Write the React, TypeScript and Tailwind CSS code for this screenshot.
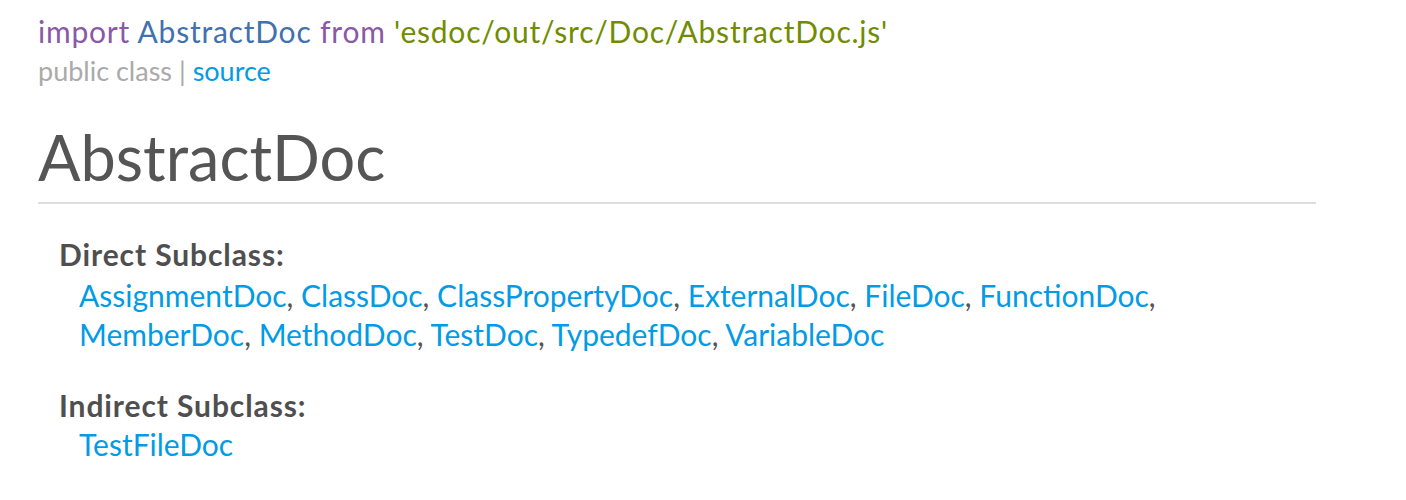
import React from "react";

const direct = [
  "AssignmentDoc",
  "ClassDoc",
  "ClassPropertyDoc",
  "ExternalDoc",
  "FileDoc",
  "FunctionDoc",
  "MemberDoc",
  "MethodDoc",
  "TestDoc",
  "TypedefDoc",
  "VariableDoc",
];

function LinkList({ names }: { names: string[] }) {
  return (
    <div className="pl-[20px] max-w-[1120px]">
      {names.map((n, i) => (
        <span key={n}>
          <a href="#" className="text-[#039be5]">
            {n}
          </a>
          {i < names.length - 1 ? ", " : ""}
        </span>
      ))}
    </div>
  );
}

export default function App() {
  return (
    <div
      className="min-h-[500px] bg-white text-[#555] pl-[38px] pt-[12px]"
      style={{ fontFamily: "Lato, 'Open Sans', sans-serif" }}
    >
      <div className="text-[30px] leading-[39px] tracking-[0.78px]">
        <span className="text-[#8959a8]">import</span>{" "}
        <span className="text-[#4271ae]">AbstractDoc</span>{" "}
        <span className="text-[#8959a8]">from</span>{" "}
        <span className="text-[#718c00]">'esdoc/out/src/Doc/AbstractDoc.js'</span>
      </div>
      <div className="text-[27px] leading-[39px] text-[#aaa]">
        public class | <a href="#" className="text-[#039be5]">source</a>
      </div>

      <h1 className="mt-[29px] w-[1278px] border-b-2 border-[#ddd] text-[63px] leading-[76px] pb-[7px] font-normal">
        AbstractDoc
      </h1>

      <div className="pl-[21px] pt-[31px] text-[30px] leading-[39px]">
        <div className="font-bold mb-[2px] tracking-[0.9px] text-[#4f4f4f]">Direct Subclass:</div>
        <LinkList names={direct} />
        <div className="font-bold mt-[32px] tracking-[0.9px] text-[#4f4f4f]">Indirect Subclass:</div>
        <LinkList names={["TestFileDoc"]} />
      </div>
    </div>
  );
}
